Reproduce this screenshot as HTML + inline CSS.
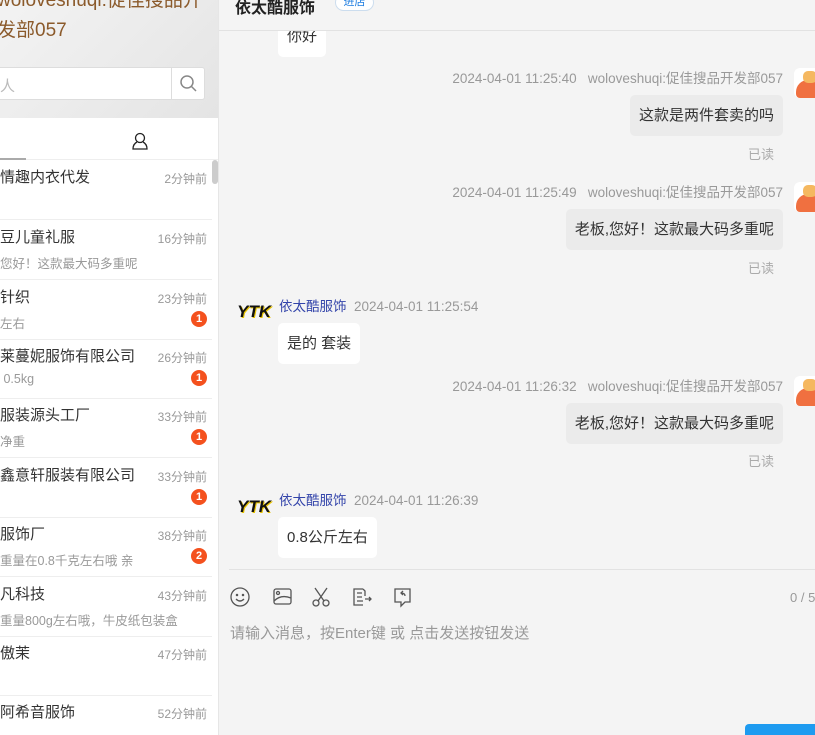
<!DOCTYPE html>
<html><head><meta charset="utf-8"><style>
*{margin:0;padding:0;box-sizing:border-box}
html,body{width:815px;height:735px;overflow:hidden}
body{position:relative;font-family:"Liberation Sans","Noto Sans CJK SC",sans-serif;background:#f4f4f4;color:#333}
.left{position:absolute;left:0;top:0;width:219px;height:735px;background:#fff;border-right:1px solid #e6e6e6}
.top{position:absolute;left:0;top:0;width:218px;height:118px;background:linear-gradient(135deg,#f3f3f3,#e4e4e4)}
.title{position:absolute;left:-3px;top:-14px;font-size:19px;line-height:30px;color:#8b5a2b;white-space:nowrap}
.search{position:absolute;left:-5px;top:67px;width:210px;height:33px;background:#fff;border:1px solid #ddd;border-radius:3px}
.search .ph{position:absolute;left:4px;top:7px;font-size:15px;color:#bbb}
.search .btn{position:absolute;right:0;top:0;width:33px;height:31px;border-left:1px solid #ddd}
.tabs{position:absolute;top:118px;left:0;width:218px;height:42px;border-bottom:1px solid #eee}
.item{position:absolute;left:0;width:212px;height:60px;border-bottom:1px solid #eee}
.item .n{position:absolute;left:0;top:6px;font-size:15px;color:#333;white-space:nowrap}
.item .t{position:absolute;right:5px;top:10px;font-size:12px;color:#999}
.item .m{position:absolute;left:0;top:33px;font-size:12.5px;color:#999;white-space:nowrap}
.item .b{position:absolute;right:5px;top:31px;width:16px;height:16px;border-radius:50%;background:#f4511e;color:#fff;font-size:11px;text-align:center;line-height:16px;font-weight:bold}
.sb{position:absolute;left:212px;top:160px;width:6px;height:24px;background:#ccc;border-radius:3px}
.hdr{position:absolute;left:219px;top:0;width:596px;height:31px;border-bottom:1px solid #e2e2e2}
.meta{position:absolute;font-size:13.5px;color:#999;white-space:nowrap}
.mr{right:32px}
.bub{position:absolute;font-size:15px;padding:0 9px;height:41px;line-height:41px;border-radius:5px;white-space:nowrap}
.me{background:#ebebeb;right:32px}
.you{background:#fff}
.read{position:absolute;font-size:13px;color:#aaa;right:41px}
.av{position:absolute;left:794px;width:30px;height:30px;border-radius:6px;background:#fff}
.av::after{content:"";position:absolute;left:2px;top:12px;width:24px;height:18px;border-radius:12px 12px 4px 4px;background:#f07040}
.av::before{content:"";position:absolute;left:9px;top:3px;width:14px;height:12px;border-radius:5px;background:#f5b860;z-index:1}
.ytk{position:absolute;left:237px;font-size:17px;font-weight:bold;font-style:italic;color:#111;text-shadow:1px 1px 0 #e6c200}
.nm{color:#3344aa}
</style></head><body>
<div class="left">
 <div class="top">
  <div class="title">woloveshuqi:促佳搜品开<br>发部057</div>
  <div class="search"><span class="ph">人</span><div class="btn"><svg width="33" height="31" viewBox="0 0 33 31"><circle cx="15" cy="14" r="6" fill="none" stroke="#888" stroke-width="1.5"/><line x1="19.5" y1="18.5" x2="24" y2="23" stroke="#888" stroke-width="1.5"/></svg></div></div>
 </div>
 <div class="tabs"><svg style="position:absolute;left:132px;top:14px" width="16" height="18" viewBox="0 0 16 18"><circle cx="8" cy="6" r="4.5" fill="none" stroke="#222" stroke-width="1.3"/><path d="M5 10 Q1 12 1 17 H15 Q15 12 11 10" fill="none" stroke="#222" stroke-width="1.3"/></svg><div style="position:absolute;left:0;bottom:-1px;width:26px;height:2px;background:#aaa"></div></div>
 <div class="sb"></div>
 <div class="item" style="top:160px"><span class="n">情趣内衣代发</span><span class="t">2分钟前</span></div>
 <div class="item" style="top:220px"><span class="n">豆儿童礼服</span><span class="t">16分钟前</span><span class="m">您好！这款最大码多重呢</span></div>
 <div class="item" style="top:280px"><span class="n">针织</span><span class="t">23分钟前</span><span class="m">左右</span><span class="b">1</span></div>
 <div class="item" style="top:339px"><span class="n">莱蔓妮服饰有限公司</span><span class="t">26分钟前</span><span class="m">&nbsp;0.5kg</span><span class="b">1</span></div>
 <div class="item" style="top:398px"><span class="n">服装源头工厂</span><span class="t">33分钟前</span><span class="m">净重</span><span class="b">1</span></div>
 <div class="item" style="top:458px"><span class="n">鑫意轩服装有限公司</span><span class="t">33分钟前</span><span class="b">1</span></div>
 <div class="item" style="top:517px"><span class="n">服饰厂</span><span class="t">38分钟前</span><span class="m">重量在0.8千克左右哦 亲</span><span class="b">2</span></div>
 <div class="item" style="top:577px"><span class="n">凡科技</span><span class="t">43分钟前</span><span class="m">重量800g左右哦，牛皮纸包装盒</span></div>
 <div class="item" style="top:636px"><span class="n">傲茉</span><span class="t">47分钟前</span></div>
 <div class="item" style="top:695px"><span class="n">阿希音服饰</span><span class="t">52分钟前</span></div>
</div>
<div class="hdr"><span style="position:absolute;left:16px;top:-6px;font-size:16px;font-weight:bold;color:#222">依太酷服饰</span><span style="position:absolute;left:116px;top:-6px;width:39px;height:17px;border:1px solid #cde;border-radius:9px;font-size:11px;color:#1e7de0;text-align:center;line-height:14px;background:#fff">进店</span></div>
<div class="bub you" style="left:278px;top:16px;clip-path:inset(15px 0 0 0)">你好</div>
<div class="meta mr" style="top:67px">2024-04-01 11:25:40&nbsp;&nbsp; woloveshuqi:促佳搜品开发部057</div>
<div class="av" style="top:68px"></div>
<div class="bub me" style="top:95px">这款是两件套卖的吗</div>
<div class="read" style="top:144px">已读</div>
<div class="meta mr" style="top:181px">2024-04-01 11:25:49&nbsp;&nbsp; woloveshuqi:促佳搜品开发部057</div>
<div class="av" style="top:182px"></div>
<div class="bub me" style="top:209px">老板,您好！这款最大码多重呢</div>
<div class="read" style="top:258px">已读</div>
<div class="ytk" style="top:302px">YTK</div>
<div class="meta" style="left:279px;top:295px"><span class="nm">依太酷服饰</span>&nbsp; 2024-04-01 11:25:54</div>
<div class="bub you" style="left:278px;top:323px">是的 套装</div>
<div class="meta mr" style="top:375px">2024-04-01 11:26:32&nbsp;&nbsp; woloveshuqi:促佳搜品开发部057</div>
<div class="av" style="top:376px"></div>
<div class="bub me" style="top:403px">老板,您好！这款最大码多重呢</div>
<div class="read" style="top:451px">已读</div>
<div class="ytk" style="top:497px">YTK</div>
<div class="meta" style="left:279px;top:489px"><span class="nm">依太酷服饰</span>&nbsp; 2024-04-01 11:26:39</div>
<div class="bub you" style="left:278px;top:517px">0.8公斤左右</div>
<div style="position:absolute;left:229px;top:569px;width:586px;height:1px;background:#e2e2e2"></div>
<svg style="position:absolute;left:229px;top:586px" width="190" height="22" viewBox="0 0 190 22" fill="none" stroke="#555" stroke-width="1.3">
<circle cx="11" cy="11" r="9"/><circle cx="8" cy="9" r=".6" fill="#555"/><circle cx="14" cy="9" r=".6" fill="#555"/><path d="M7 13 Q11 17 15 13"/>
<rect x="45" y="3" width="17" height="15" rx="2"/><circle cx="49" cy="7" r="1.5"/><path d="M45 15 Q52 8 62 12"/>
<circle cx="87" cy="17" r="3"/><circle cx="97" cy="17" r="3"/><path d="M89 15 L98 2 M95 15 L86 2"/>
<path d="M134 3 H125 V19 H134 M128 7 H133 M128 11 H133 M128 15 H134 M136 13 H142 M140 11 L142 13 L140 15 M134 3 L136 5 V10"/>
<path d="M166 3 H181 V16 H176 L172 20 V16 H166 Z M176 10 Q176 7 172 7 M174 5 L172 7 L174 9"/>
</svg>
<div style="position:absolute;left:790px;top:590px;font-size:13px;color:#999;white-space:nowrap">0 / 5</div>
<div style="position:absolute;left:230px;top:622px;font-size:15px;color:#999">请输入消息，按Enter键 或 点击发送按钮发送</div>
<div style="position:absolute;left:745px;top:724px;width:80px;height:11px;border-radius:4px 4px 0 0;background:#1e9bf0"></div>
</body></html>
